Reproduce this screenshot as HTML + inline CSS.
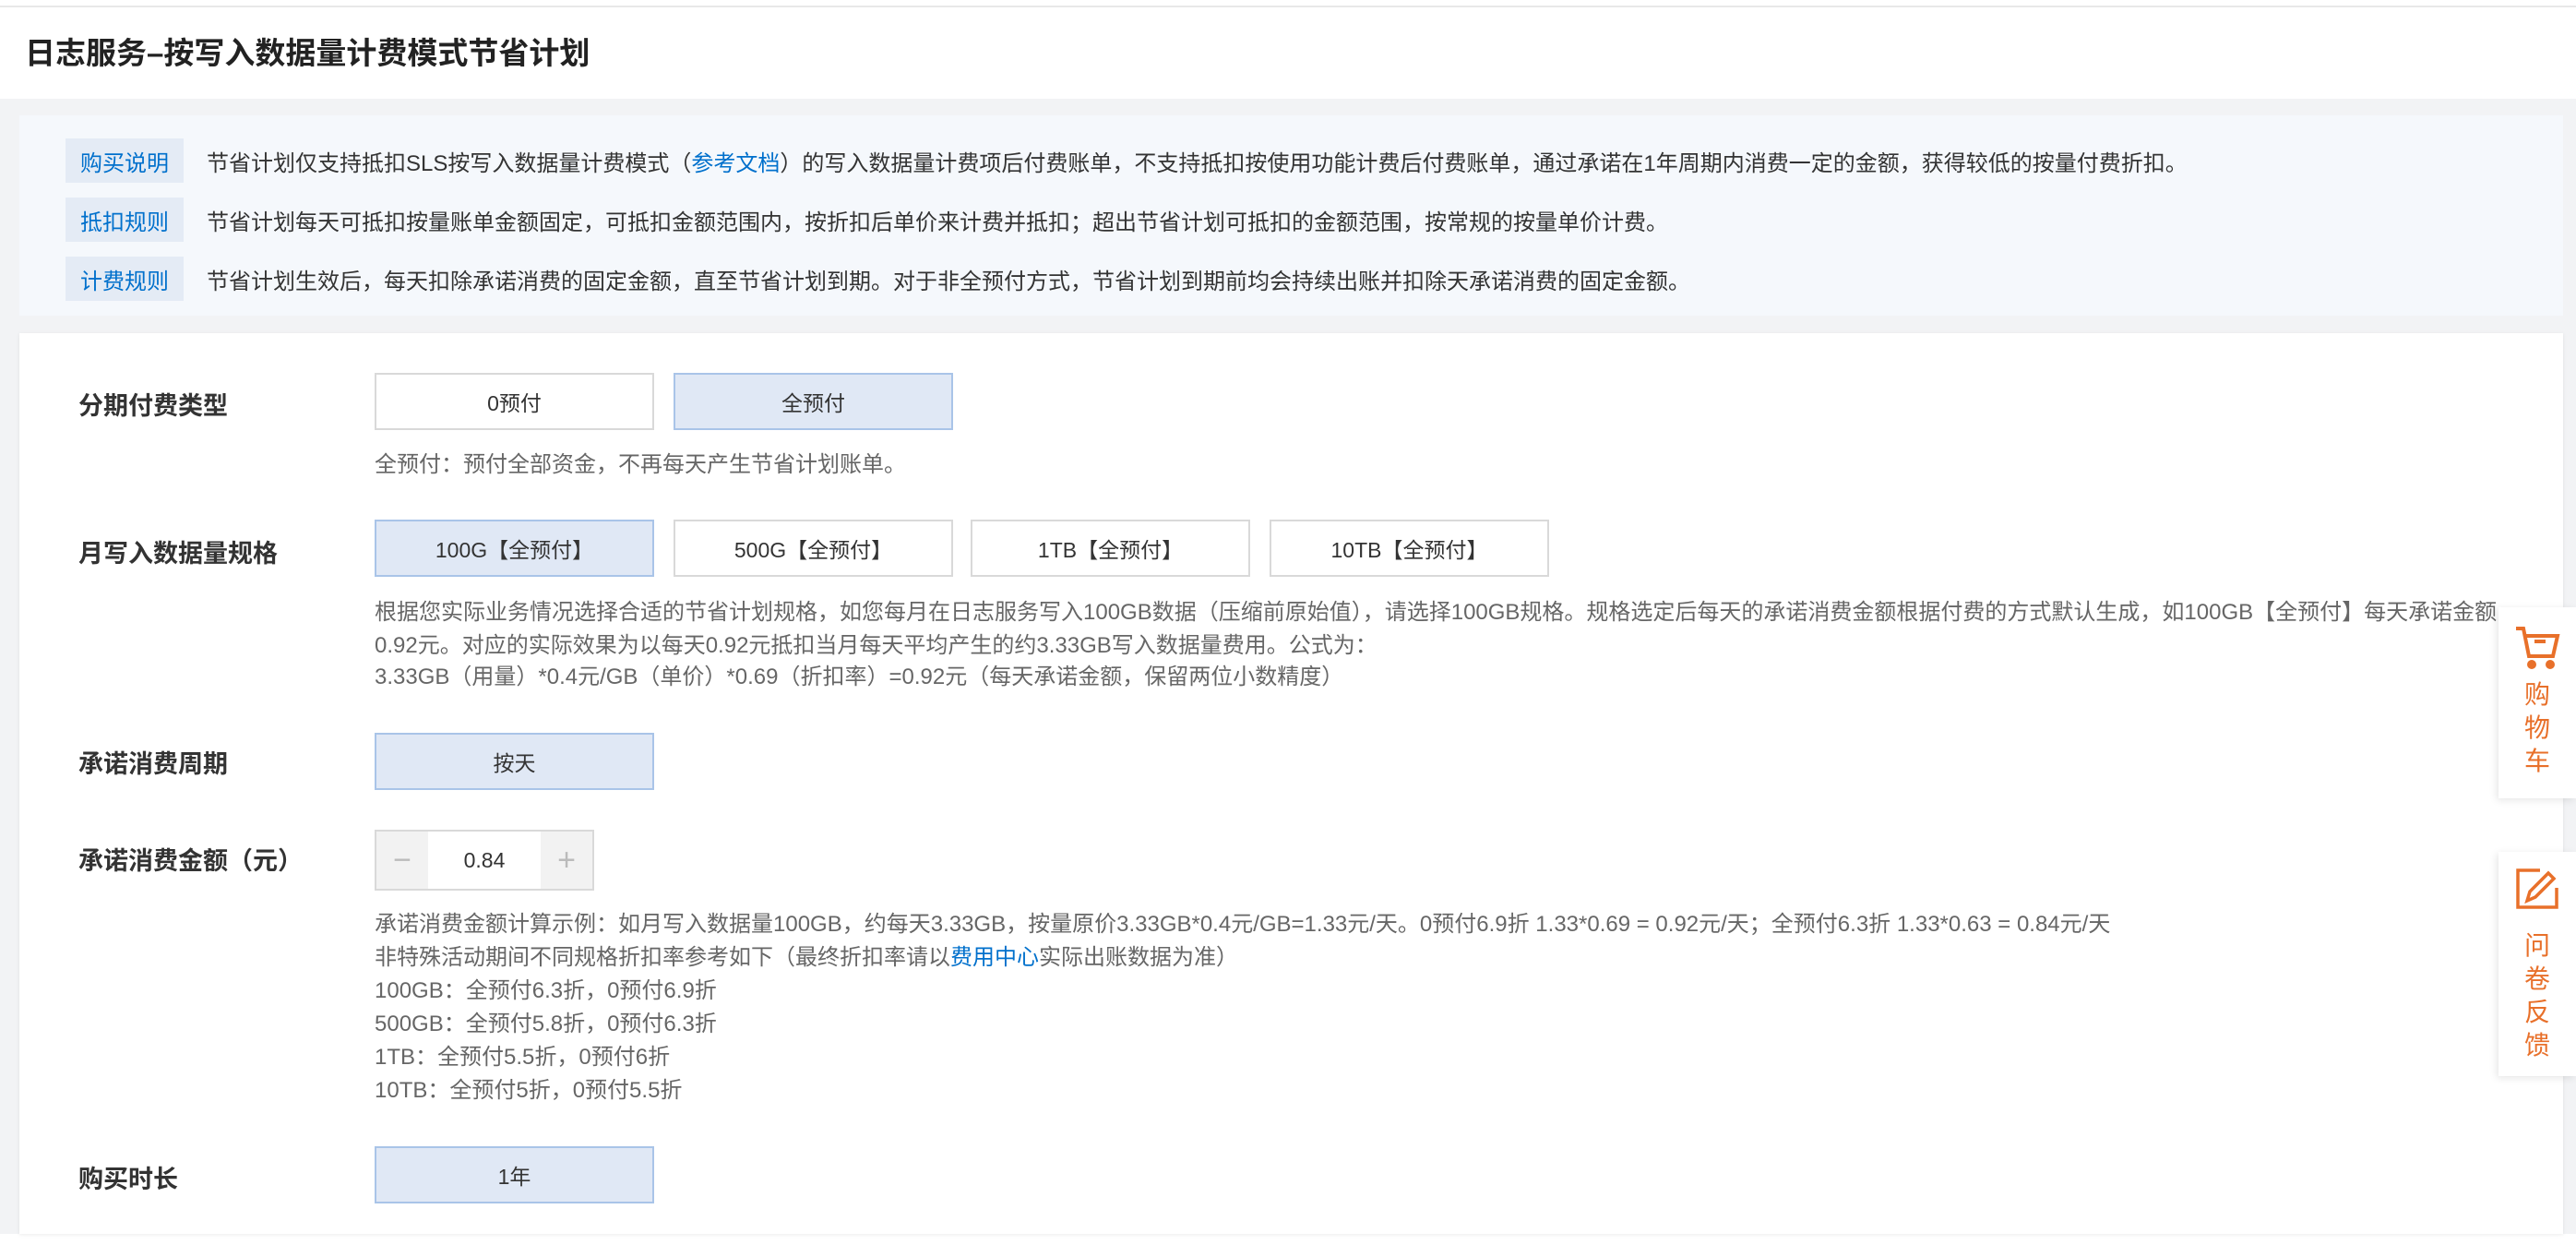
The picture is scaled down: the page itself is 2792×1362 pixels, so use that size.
<!DOCTYPE html>
<html><head><meta charset="utf-8"><style>
*{box-sizing:border-box;margin:0;padding:0}
body{width:2792px;height:1362px;background:#fff;font-family:"Liberation Sans","Noto Sans CJK SC",sans-serif;color:#333;position:relative;overflow:hidden}
.topline{position:absolute;left:0;top:6px;width:2792px;height:2px;background:#e8e8e8}
.title{position:absolute;left:27px;top:35px;font-size:33px;font-weight:bold;color:#222;line-height:46px}
.band{position:absolute;left:0;top:107px;width:2792px;height:1230px;background:#f2f3f5}
.info{position:absolute;left:21px;top:125px;width:2757px;height:217px;background:#f5f8fc}
.irow{position:absolute;left:50px;height:48px;display:flex;align-items:center;font-size:24px;color:#333;white-space:nowrap}
.tag{width:128px;height:48px;background:#e4ebf5;color:#0070cc;display:flex;align-items:center;justify-content:center;margin-right:25px}
a{color:#0070cc;text-decoration:none}
.panel{position:absolute;left:21px;top:361px;width:2757px;height:976px;background:#fff;box-shadow:0 1px 4px rgba(0,0,0,.08);overflow:hidden}
.lbl{position:absolute;left:64px;font-size:27px;font-weight:bold;color:#333;line-height:36px}
.btn{position:absolute;width:303px;height:62px;border:2px solid #d9d9d9;background:#fff;font-size:23px;display:flex;align-items:center;justify-content:center;color:#333}
.sel{background:#e0e8f5;border-color:#a9c4e8}
.hint{position:absolute;left:385px;font-size:24px;color:#666;line-height:36px;white-space:nowrap}
.step{position:absolute;left:385px;top:538px;width:238px;height:66px;border:2px solid #d9d9d9;display:flex}
.step .s{width:56px;background:#f2f2f2;color:#bbb;font-size:34px;display:flex;align-items:center;justify-content:center;font-weight:300}
.step .v{flex:1;background:#fff;font-size:23px;display:flex;align-items:center;justify-content:center}
.float{position:absolute;left:2708px;width:84px;background:#fff;box-shadow:-2px 2px 8px rgba(0,0,0,.1);color:#e8702a;font-size:28px;text-align:center;line-height:36px}
</style></head><body>
<div class="topline"></div>
<div class="title">日志服务–按写入数据量计费模式节省计划</div>
<div class="band"></div>
<div class="info">
<div class="irow" style="top:25px"><span class="tag">购买说明</span>节省计划仅支持抵扣SLS按写入数据量计费模式（<a>参考文档</a>）的写入数据量计费项后付费账单，不支持抵扣按使用功能计费后付费账单，通过承诺在1年周期内消费一定的金额，获得较低的按量付费折扣。</div>
<div class="irow" style="top:89px"><span class="tag">抵扣规则</span>节省计划每天可抵扣按量账单金额固定，可抵扣金额范围内，按折扣后单价来计费并抵扣；超出节省计划可抵扣的金额范围，按常规的按量单价计费。</div>
<div class="irow" style="top:153px"><span class="tag">计费规则</span>节省计划生效后，每天扣除承诺消费的固定金额，直至节省计划到期。对于非全预付方式，节省计划到期前均会持续出账并扣除天承诺消费的固定金额。</div>
</div>
<div class="panel">
<div class="lbl" style="top:61px">分期付费类型</div>
<div class="btn" style="left:385px;top:43px">0预付</div>
<div class="btn sel" style="left:709px;top:43px">全预付</div>
<div class="hint" style="top:125px">全预付：预付全部资金，不再每天产生节省计划账单。</div>
<div class="lbl" style="top:221px">月写入数据量规格</div>
<div class="btn sel" style="left:385px;top:202px">100G【全预付】</div>
<div class="btn" style="left:709px;top:202px">500G【全预付】</div>
<div class="btn" style="left:1031px;top:202px">1TB【全预付】</div>
<div class="btn" style="left:1355px;top:202px">10TB【全预付】</div>
<div class="hint" style="top:285px;width:2310px;overflow:hidden">根据您实际业务情况选择合适的节省计划规格，如您每月在日志服务写入100GB数据（压缩前原始值），请选择100GB规格。规格选定后每天的承诺消费金额根据付费的方式默认生成，如100GB【全预付】每天承诺金额</div>
<div class="hint" style="top:321px">0.92元。对应的实际效果为以每天0.92元抵扣当月每天平均产生的约3.33GB写入数据量费用。公式为：</div>
<div class="hint" style="top:355px">3.33GB（用量）*0.4元/GB（单价）*0.69（折扣率）=0.92元（每天承诺金额，保留两位小数精度）</div>
<div class="lbl" style="top:449px">承诺消费周期</div>
<div class="btn sel" style="left:385px;top:433px">按天</div>
<div class="lbl" style="top:554px">承诺消费金额（元）</div>
<div class="step"><div class="s">−</div><div class="v">0.84</div><div class="s">+</div></div>
<div class="hint" style="top:623px">承诺消费金额计算示例：如月写入数据量100GB，约每天3.33GB，按量原价3.33GB*0.4元/GB=1.33元/天。0预付6.9折 1.33*0.69 = 0.92元/天；全预付6.3折 1.33*0.63 = 0.84元/天</div>
<div class="hint" style="top:659px">非特殊活动期间不同规格折扣率参考如下（最终折扣率请以<a>费用中心</a>实际出账数据为准）</div>
<div class="hint" style="top:695px">100GB：全预付6.3折，0预付6.9折</div>
<div class="hint" style="top:731px">500GB：全预付5.8折，0预付6.3折</div>
<div class="hint" style="top:767px">1TB：全预付5.5折，0预付6折</div>
<div class="hint" style="top:803px">10TB：全预付5折，0预付5.5折</div>
<div class="lbl" style="top:899px">购买时长</div>
<div class="btn sel" style="left:385px;top:881px">1年</div>
</div>
<div class="float" style="top:658px;height:207px;padding-top:20px">
<svg width="50" height="48" viewBox="0 0 50 48" fill="none" stroke="#e8702a" stroke-width="4"><path d="M2 3h8l6 30h26l5-22H12"/><path d="M22 17h12"/><circle cx="19" cy="42" r="3" fill="#e8702a"/><circle cx="39" cy="42" r="3" fill="#e8702a"/></svg>
<div>购<br>物<br>车</div></div>
<div class="float" style="top:923px;height:243px;padding-top:17px">
<svg width="50" height="46" viewBox="0 0 50 46" fill="none" stroke="#e8702a" stroke-width="3.5"><path d="M28 3H4v40h42V22"/><path d="M14 36l3-10 20-20 6 6-20 20z"/></svg>
<div style="margin-top:12px">问<br>卷<br>反<br>馈</div></div>
</body></html>
